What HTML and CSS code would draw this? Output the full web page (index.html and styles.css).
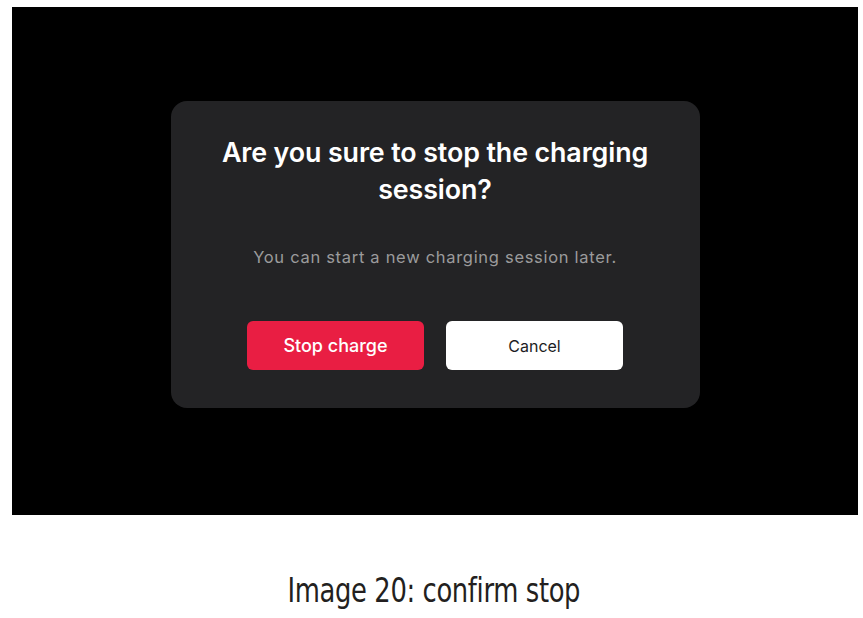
FILE: index.html
```html
<!DOCTYPE html>
<html lang="en">
<head>
    <meta charset="UTF-8">
    <meta name="viewport" content="width=device-width, initial-scale=1.0">
    <title>Image 20: confirm stop</title>
    <link rel="stylesheet" href="styles.css">
</head>
<body>
    <div class="screen">
        <div class="dialog">
            <h2 class="dialog-title">Are you sure to stop the charging session?</h2>
            <p class="dialog-text">You can start a new charging session later.</p>
            <div class="dialog-actions">
                <button class="btn btn-stop">Stop charge</button>
                <button class="btn btn-cancel">Cancel</button>
            </div>
        </div>
    </div>
    <p class="caption">Image 20: confirm stop</p>
</body>
</html>
```
FILE: styles.css
```css
body {
    margin: 0;
    background: #fff;
    font-family: Inter, "Open Sans", sans-serif;
}

.screen {
    margin: 7px 5px 0 12px;
    height: 508px;
    background: #000;
    display: flex;
    justify-content: center;
    align-items: flex-start;
    padding-top: 94px;
    box-sizing: border-box;
}

.dialog {
    width: 529px;
    height: 307px;
    box-sizing: border-box;
    background: #232325;
    border-radius: 16px;
    padding: 33px 30px 0;
    display: flex;
    flex-direction: column;
    align-items: center;
}

.dialog-title {
    margin: 0;
    width: 460px;
    text-align: center;
    color: #fff;
    font-size: 26.8px;
    font-weight: 600;
    line-height: 37px;
    letter-spacing: -0.1px;
}

.dialog-text {
    margin: 39px 0 0;
    color: #9b9b9c;
    font-size: 16.5px;
    letter-spacing: 0.7px;
}

.dialog-actions {
    display: flex;
    gap: 22px;
    margin-top: 54px;
}

.btn {
    width: 177px;
    height: 49px;
    border: none;
    border-radius: 6px;
    font-family: inherit;
    cursor: pointer;
}

.btn-stop {
    background: #e91e43;
    color: #fff;
    font-size: 18px;
    font-weight: 500;
}

.btn-cancel {
    background: #fff;
    color: #1d1d1f;
    font-size: 16px;
}

.caption {
    margin: 55px 0 0;
    text-align: center;
    padding-left: 6px;
    color: #231f20;
    font-family: "DejaVu Sans", sans-serif;
    font-size: 34px;
    letter-spacing: -0.5px;
    transform: scaleX(0.76);
}
```
